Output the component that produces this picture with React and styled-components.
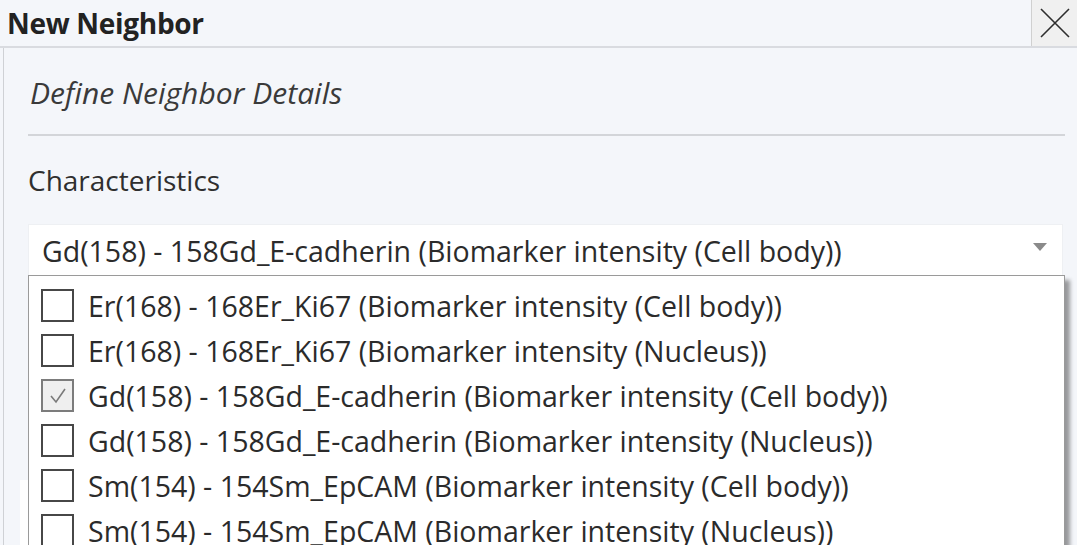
import React from "react";
import styled, { createGlobalStyle } from "styled-components";

const GlobalStyle = createGlobalStyle`
  html, body {
    margin: 0;
    padding: 0;
    background: #f4f6fa;
  }
  body {
    font-family: "Open Sans", "Noto Sans", "Liberation Sans", sans-serif;
    color: #2b2b2b;
  }
`;

const Dialog = styled.div`
  position: relative;
  width: 1077px;
  height: 545px;
  overflow: hidden;
  background: #f4f6fa;
`;

const Header = styled.div`
  display: flex;
  align-items: stretch;
  height: 46px;
  border-bottom: 2px solid #d9dbe0;
`;

const Title = styled.div`
  flex: 1;
  display: flex;
  align-items: center;
  padding-left: 7px;
  font-size: 28px;
  font-weight: 700;
  letter-spacing: -0.3px;
  color: #222;
`;

const CloseButton = styled.button`
  width: 46px;
  padding: 0;
  border: none;
  border-left: 1px solid #d0d0d0;
  background: #f0f0f0;
  display: flex;
  align-items: center;
  justify-content: center;
  cursor: pointer;
`;

const Body = styled.div`
  margin-left: 3px;
  border-left: 1px solid #cfd1d5;
  padding: 0 12px 0 24px;
  height: 497px;
`;

const Subtitle = styled.div`
  padding: 27px 0 0 2px;
  height: 36px;
  line-height: 36px;
  font-size: 30px;
  font-style: italic;
  color: #3a3a3a;
`;

const Divider = styled.div`
  margin-top: 23px;
  height: 2px;
  background: #d3d5d9;
`;

const Label = styled.div`
  margin-top: 26px;
  height: 36px;
  line-height: 36px;
  font-size: 28px;
  color: #2f2f2f;
`;

const Select = styled.div`
  margin-top: 26px;
  width: 1035px;
  height: 52px;
  box-sizing: border-box;
  background: #fff;
  border: 1px solid #eef0f3;
  display: flex;
  align-items: center;
  justify-content: space-between;
  padding: 2px 15px 0 13px;
  font-size: 28.5px;
  color: #2b2b2b;
`;

const Arrow = styled.span`
  width: 0;
  height: 0;
  border-left: 7px solid transparent;
  border-right: 7px solid transparent;
  border-top: 8px solid #8a8a8a;
  margin-top: -8px;
`;

const HiddenField = styled.div`
  margin: 204px 0 0 -8px;
  width: 300px;
  height: 80px;
  background: #fff;
`;

const Menu = styled.div`
  position: absolute;
  left: 28px;
  top: 275px;
  width: 1037px;
  height: 300px;
  box-sizing: border-box;
  background: #fff;
  border: 1px solid #9a9a9a;
  box-shadow: 5px 5px 4px rgba(0, 0, 0, 0.38);
  padding-top: 7px;
`;

const Option = styled.div`
  display: flex;
  align-items: center;
  height: 45px;
  padding-left: 12px;
  font-size: 28.5px;
  color: #2b2b2b;
  white-space: nowrap;
`;

const Box = styled.span`
  flex: none;
  width: 33px;
  height: 33px;
  box-sizing: border-box;
  border: 2.5px solid ${(p) => (p.checked ? "#7c7c7c" : "#474747")};
  background: ${(p) => (p.checked ? "#efefef" : "#fff")};
  margin-right: 14px;
  display: flex;
  align-items: center;
  justify-content: center;
`;

const options = [
  { text: "Er(168) - 168Er_Ki67 (Biomarker intensity (Cell body))" },
  { text: "Er(168) - 168Er_Ki67 (Biomarker intensity (Nucleus))" },
  { text: "Gd(158) - 158Gd_E-cadherin (Biomarker intensity (Cell body))", checked: true },
  { text: "Gd(158) - 158Gd_E-cadherin (Biomarker intensity (Nucleus))" },
  { text: "Sm(154) - 154Sm_EpCAM (Biomarker intensity (Cell body))" },
  { text: "Sm(154) - 154Sm_EpCAM (Biomarker intensity (Nucleus))" },
];

const App = () => {
  return (
    <>
      <GlobalStyle />
      <Dialog>
        <Header>
          <Title>New Neighbor</Title>
          <CloseButton aria-label="Close">
            <svg width="30" height="30" viewBox="0 0 30 30">
              <path d="M1 1 L29 29 M29 1 L1 29" stroke="#2e2e2e" strokeWidth="1.6" fill="none" />
            </svg>
          </CloseButton>
        </Header>
        <Body>
          <Subtitle>Define Neighbor Details</Subtitle>
          <Divider />
          <Label>Characteristics</Label>
          <Select>
            <span>Gd(158) - 158Gd_E-cadherin (Biomarker intensity (Cell body))</span>
            <Arrow />
          </Select>
          <HiddenField />
        </Body>
        <Menu>
          {options.map((o) => (
            <Option key={o.text}>
              <Box checked={o.checked}>
                {o.checked && (
                  <svg width="20" height="20" viewBox="0 0 20 20">
                    <path d="M3 10 L8 16 L17 3" stroke="#7a7a7a" strokeWidth="1.6" fill="none" />
                  </svg>
                )}
              </Box>
              {o.text}
            </Option>
          ))}
        </Menu>
      </Dialog>
    </>
  );
};

export default App;
